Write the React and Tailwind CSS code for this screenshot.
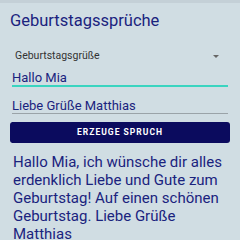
import React, { useState } from 'react';

const App = () => {
  const [name, setName] = useState('Hallo Mia');
  const [from, setFrom] = useState('Liebe Grüße Matthias');

  return (
    <div className="w-[240px] h-[240px] overflow-hidden bg-[#d0dde3]" style={{ fontFamily: 'Roboto, sans-serif' }}>
      <div className="h-[3px] bg-[#c4d0d7]" />
      <div className="px-[10px]">
        <h1 className="mt-[8px] text-[16.5px] leading-[20px] text-[#1a237e]">Geburtstagssprüche</h1>

        <div className="mt-[18px] flex items-center justify-between pl-[5px] pr-[11px] h-[14px]">
          <span className="text-[10.5px] leading-[14px] text-[#333]">Geburtstagsgrüße</span>
          <span className="w-0 h-0 border-l-[3px] border-r-[3px] border-t-[3px] border-l-transparent border-r-transparent border-t-[#666]" />
        </div>

        <div className="mt-[7px] mx-[2px] border-b-2 border-[#3ad4c0]">
          <input
            className="block w-full bg-transparent outline-none text-[13px] leading-[15px] h-[15px] text-[#1a237e]"
            value={name}
            onChange={(e) => setName(e.target.value)}
          />
        </div>

        <div className="mt-[11px] mx-[2px] border-b border-[#9aa3a8]">
          <input
            className="block w-full bg-transparent outline-none text-[13px] leading-[15px] h-[15px] text-[#1a237e]"
            value={from}
            onChange={(e) => setFrom(e.target.value)}
          />
        </div>

        <button className="block mt-[8px] w-full h-[21px] rounded-[3px] bg-[#0b0b5e] text-white text-[8.5px] font-bold tracking-[0.12em]">
          ERZEUGE SPRUCH
        </button>

        <p className="mt-[10px] ml-[3px] w-[220px] text-[15px] leading-[18px] text-[#1a237e]">
          Hallo Mia, ich wünsche dir alles erdenklich Liebe und Gute zum Geburtstag! Auf einen schönen Geburtstag. Liebe Grüße Matthias
        </p>
      </div>
    </div>
  );
};

export default App;
